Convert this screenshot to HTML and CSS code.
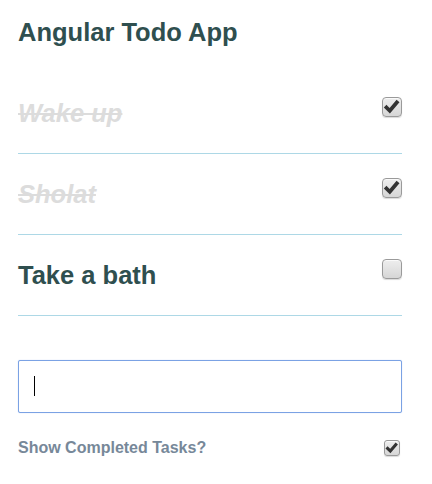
FILE: index.html
```html
<!DOCTYPE html>
<html>
<head>
<meta charset="utf-8">
<title>Angular Todo App</title>
<link rel="stylesheet" href="styles.css">
</head>
<body>
<div class="app">
  <h1 class="title">Angular Todo App</h1>
  <ul class="list">
    <li class="row">
      <span class="task done">Wake up</span>
      <span class="box"><svg viewBox="0 0 20 20" width="20" height="20"><polyline points="4.5,10.5 7.8,13.8 14.8,5.5" fill="none" stroke="#333" stroke-width="3.8" stroke-linecap="square" stroke-linejoin="miter"/></svg></span>
    </li>
    <li class="row">
      <span class="task done">Sholat</span>
      <span class="box"><svg viewBox="0 0 20 20" width="20" height="20"><polyline points="4.5,10.5 7.8,13.8 14.8,5.5" fill="none" stroke="#333" stroke-width="3.8" stroke-linecap="square" stroke-linejoin="miter"/></svg></span>
    </li>
    <li class="row">
      <span class="task">Take a bath</span>
      <span class="box"></span>
    </li>
  </ul>
  <div class="field">
    <input class="entry" type="text">
    <span class="caret"></span>
  </div>
  <div class="toggle">
    <span class="toggle-label">Show Completed Tasks?</span>
    <span class="box small"><svg viewBox="0 0 16 16" width="16" height="16"><polyline points="3.6,8.4 6.3,11 11.8,4.6" fill="none" stroke="#333" stroke-width="3" stroke-linecap="square"/></svg></span>
  </div>
</div>
</body>
</html>
```
FILE: styles.css
```css
html, body {
  margin: 0;
  padding: 0;
  background: #fff;
}
body {
  font-family: "Liberation Sans", Arial, sans-serif;
}
.app {
  padding: 17px 30px 0 18px;
}
.title {
  margin: 0;
  font-size: 25.5px;
  line-height: 30px;
  font-weight: bold;
  color: #2f4f4f;
}
.list {
  list-style: none;
  margin: 26px 0 0 0;
  padding: 0;
}
.row {
  display: flex;
  justify-content: space-between;
  align-items: flex-start;
  height: 80px;
  box-sizing: content-box;
  border-bottom: 1px solid #add8e6;
}
.task {
  margin-top: 25px;
  font-size: 25.5px;
  line-height: 30px;
  font-weight: bold;
  color: #2f4f4f;
}
.task.done {
  color: #dcdcdc;
  font-style: italic;
  text-decoration: line-through;
}
.box {
  margin-top: 24px;
  width: 20px;
  height: 20px;
  box-sizing: border-box;
  border: 1px solid #9a9a9a;
  border-radius: 4px;
  background: linear-gradient(#eeeeee, #d6d6d6);
  box-shadow: inset 0 1px 0 #fafafa, 0 1px 1px rgba(0,0,0,0.15);
  display: flex;
  align-items: center;
  justify-content: center;
  overflow: hidden;
}
.box svg {
  display: block;
  flex: none;
}
.field {
  position: relative;
  margin-top: 44px;
}
.entry {
  display: block;
  width: 100%;
  height: 53px;
  box-sizing: border-box;
  margin: 0;
  border: 1px solid #7ba2e4;
  border-radius: 2px;
  box-shadow: 0 0 1px 0 #a9c4f2;
  outline: none;
  padding: 0 15px;
  font-size: 18px;
  font-family: "Liberation Sans", Arial, sans-serif;
}
.caret {
  position: absolute;
  left: 16px;
  top: 16px;
  width: 1px;
  height: 20px;
  background: #000;
}
.toggle {
  display: flex;
  justify-content: space-between;
  align-items: center;
  height: 20px;
  margin-top: 25px;
}
.toggle-label {
  font-size: 16px;
  line-height: 20px;
  font-weight: bold;
  color: #778899;
}
.box.small {
  margin: 0 2px 0 0;
  width: 16px;
  height: 16px;
  border-radius: 3px;
}
```
